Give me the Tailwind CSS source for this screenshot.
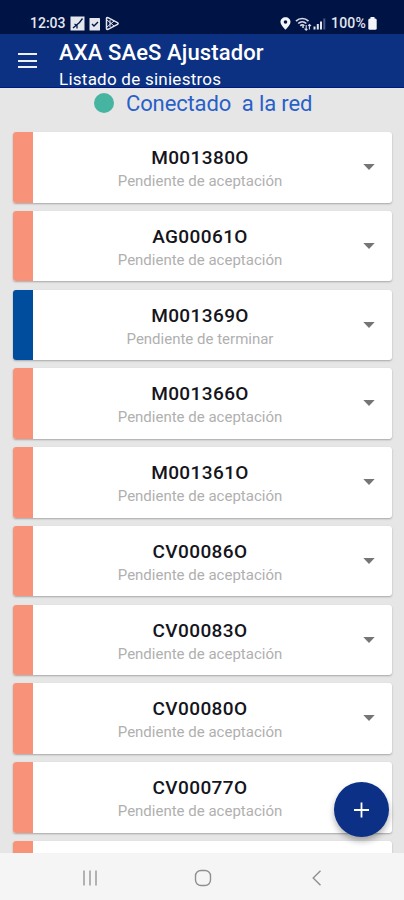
<!DOCTYPE html>
<html lang="es">
<head>
  <meta charset="UTF-8" />
  <meta name="viewport" content="width=device-width, initial-scale=1.0"/>
  <title>AXA SAeS Ajustador</title>
  <script src="https://cdn.jsdelivr.net/npm/@tailwindcss/browser@4"></script>
</head>
<body class="bg-[#e6e6e6] font-[Roboto,sans-serif]">
  <div class="relative flex flex-col h-[900px] w-[404px] overflow-hidden">
    <!-- Status bar -->
    <div class="h-[34px] shrink-0 bg-[#001345] text-[#e4e6ee] flex items-end justify-between pl-[30px] pr-[27px] pb-[3px] text-[14px] leading-[15px] font-medium">
      <div class="flex items-center">
        <span class="w-[36px] whitespace-nowrap">12:03</span>
        <svg class="ml-[4px] w-[15px] h-[15px]" viewBox="0 0 15 15">
          <rect x="0.5" y="0.5" width="14" height="14" fill="#e4e6ee"/>
          <path d="M3 12 L9.5 6.5 L12.5 2.5 M4.5 8 L7 9.5 V12.5" fill="none" stroke="#001345" stroke-width="1.3"/>
        </svg>
        <svg class="ml-[4px] w-[12px] h-[14px]" viewBox="0 0 12 14">
          <rect x="0.5" y="1" width="10.5" height="12.5" rx="0.6" fill="#e4e6ee"/>
          <path d="M3 7 L5 9 L9 5" fill="none" stroke="#001345" stroke-width="1.4"/>
        </svg>
        <svg class="ml-[4px] w-[15px] h-[15px]" viewBox="0 0 15 15" fill="none" stroke="#e4e6ee" stroke-width="1.5" stroke-linejoin="round">
          <path d="M1.5 2.5 Q1.5 1 3 1.7 L12.5 6.6 Q13.8 7.5 12.5 8.4 L3 13.3 Q1.5 14 1.5 12.5 Z"/>
          <path d="M2 4 L9 10 M2 11 L9 5 M5 4 V11" stroke-width="1"/>
        </svg>
      </div>
      <div class="flex items-center">
        <svg class="w-[11px] h-[13px]" viewBox="0 0 11 13" fill="#f4f5f8">
          <path fill-rule="evenodd" d="M5.5 0.3 C2.6 0.3 0.5 2.4 0.5 5 C0.5 8.2 5.5 12.7 5.5 12.7 C5.5 12.7 10.5 8.2 10.5 5 C10.5 2.4 8.4 0.3 5.5 0.3 Z M5.5 3.2 A1.8 1.8 0 1 1 5.5 6.8 A1.8 1.8 0 1 1 5.5 3.2 Z"/>
        </svg>
        <svg class="ml-[4px] w-[17px] h-[14px]" viewBox="0 0 17 14" fill="none" stroke="#d5d8e4" stroke-width="1.7">
          <path d="M1 4.2 C4.5 0.6 10 0.6 13.5 4.2 M3.2 6.5 C5.6 4.2 9 4.2 11.3 6.5 M5.3 8.8 C6.5 7.6 8.1 7.6 9.3 8.8"/>
          <path d="M7 10 H9" stroke-width="1.4"/>
          <path d="M11.2 8 V13 M9.6 11.6 L11.2 13.2 L12.4 12 M14.4 12.5 V7.5 M13.2 8.8 L14.4 7.5 L16 9" stroke-width="1.1"/>
        </svg>
        <svg class="ml-px w-[13px] h-[13px]" viewBox="0 0 13 13" fill="#e4e6ee">
          <rect x="0.5" y="9.5" width="2" height="3"/>
          <rect x="3.8" y="7" width="2" height="5.5"/>
          <rect x="7" y="4.5" width="2" height="8"/>
          <rect x="10.3" y="1.5" width="2" height="11" fill="#4b5782"/>
        </svg>
        <span class="ml-[5px] w-[35px] whitespace-nowrap tracking-[0.2px]">100%</span>
        <svg class="ml-[2px] w-[9px] h-[13px]" viewBox="0 0 9 13" fill="#f4f5f8">
          <rect x="2.5" y="0" width="4" height="3"/>
          <rect x="0.3" y="1.5" width="8.4" height="11.2" rx="1.5"/>
        </svg>
      </div>
    </div>

    <!-- App bar -->
    <header class="h-[54px] shrink-0 bg-[#0c3182] border-b border-[#001a83] text-white flex">
      <button class="w-[59px] pl-[18px] pt-[19px] flex flex-col gap-[4px]" aria-label="Menú">
        <span class="h-[2px] w-[19px] bg-[#eef0f7]"></span>
        <span class="mt-px h-[2px] w-[19px] bg-[#eef0f7]"></span>
        <span class="h-[2px] w-[19px] bg-[#eef0f7]"></span>
      </button>
      <div class="whitespace-nowrap">
        <h1 class="mt-[6px] text-[22px] leading-[26px] font-medium tracking-[0.12px]">AXA SAeS Ajustador</h1>
        <p class="mt-[3px] text-[17px] leading-[20px] tracking-[0.25px]">Listado de siniestros</p>
      </div>
    </header>

    <main class="h-[765px] shrink-0 overflow-hidden">
      <div class="h-[44px] flex items-start pl-[94px] pt-[5px]">
        <span class="size-[20px] rounded-full bg-[#45b5a1]"></span>
        <p class="ml-[12px] -mt-[2px] text-[22px] leading-[26px] tracking-[-0.13px] text-[#2860c8] whitespace-pre">Conectado  a la red</p>
      </div>
      <ul id="lista" class="flex flex-col gap-[8.25px] pl-[13px] pr-[12px]"></ul>
    </main>

    <!-- Navigation bar -->
    <nav class="flex-1 bg-[#f5f5f5] flex items-center pl-[82px] pt-[3px]">
      <svg class="w-[16px] h-[16px]" viewBox="0 0 16 16" stroke="#969696" stroke-width="1.4">
        <path d="M2 0.5 V15.5 M8 0.5 V15.5 M14 0.5 V15.5"/>
      </svg>
      <svg class="ml-[96px] w-[18px] h-[18px]" viewBox="0 0 18 18" fill="none" stroke="#8f8f8f" stroke-width="1.4">
        <rect x="1.5" y="1.5" width="15" height="15" rx="5.5"/>
      </svg>
      <svg class="ml-[100px] w-[10px] h-[16px]" viewBox="0 0 10 16" fill="none" stroke="#8f8f8f" stroke-width="1.4">
        <path d="M8.5 0.8 L1.2 8 L8.5 15.2"/>
      </svg>
    </nav>

    <button class="absolute left-[334px] top-[782px] size-[55px] rounded-full bg-[#0c3085] shadow-[0_4px_6px_rgba(0,0,0,0.3)] flex items-center justify-center" aria-label="Añadir">
      <svg class="w-[15px] h-[16px]" viewBox="0 0 15 16" stroke="#fff" stroke-width="1.8">
        <path d="M7.5 0.5 V15.5 M0 8 H15"/>
      </svg>
    </button>
  </div>

  <script>
    const siniestros = [
      { id: 'M001380O', estado: 'Pendiente de aceptación' },
      { id: 'AG00061O', estado: 'Pendiente de aceptación' },
      { id: 'M001369O', estado: 'Pendiente de terminar' },
      { id: 'M001366O', estado: 'Pendiente de aceptación' },
      { id: 'M001361O', estado: 'Pendiente de aceptación' },
      { id: 'CV00086O', estado: 'Pendiente de aceptación' },
      { id: 'CV00083O', estado: 'Pendiente de aceptación' },
      { id: 'CV00080O', estado: 'Pendiente de aceptación' },
      { id: 'CV00077O', estado: 'Pendiente de aceptación' },
      { id: '', estado: '' }
    ];

    const lista = document.getElementById('lista');

    siniestros.forEach(s => {
      const color = s.estado === 'Pendiente de terminar' ? 'bg-[#004c9d]' : 'bg-[#f8937a]';
      const li = document.createElement('li');
      li.className = 'h-[70.5px] shrink-0 flex bg-white rounded-[3px] overflow-hidden shadow-[0_1px_2px_rgba(0,0,0,0.28)]';
      li.innerHTML = `
        <div class="w-[20px] ${color}"></div>
        <div class="w-[334px] pt-[14px] text-center whitespace-nowrap">
          <p class="text-[19px] leading-[24px] font-medium tracking-[0.4px] text-[#14141c]">${s.id}</p>
          <p class="text-[15px] leading-[22px] text-[#b0b0b0]">${s.estado}</p>
        </div>
        <svg class="-ml-[4px] mt-[32px] w-[12px] h-[6px]" viewBox="0 0 12 6" fill="#757575">
          <path d="M0.3 0 H11.7 L6 6 Z"/>
        </svg>
      `;
      lista.appendChild(li);
    });
  </script>
</body>
</html>
